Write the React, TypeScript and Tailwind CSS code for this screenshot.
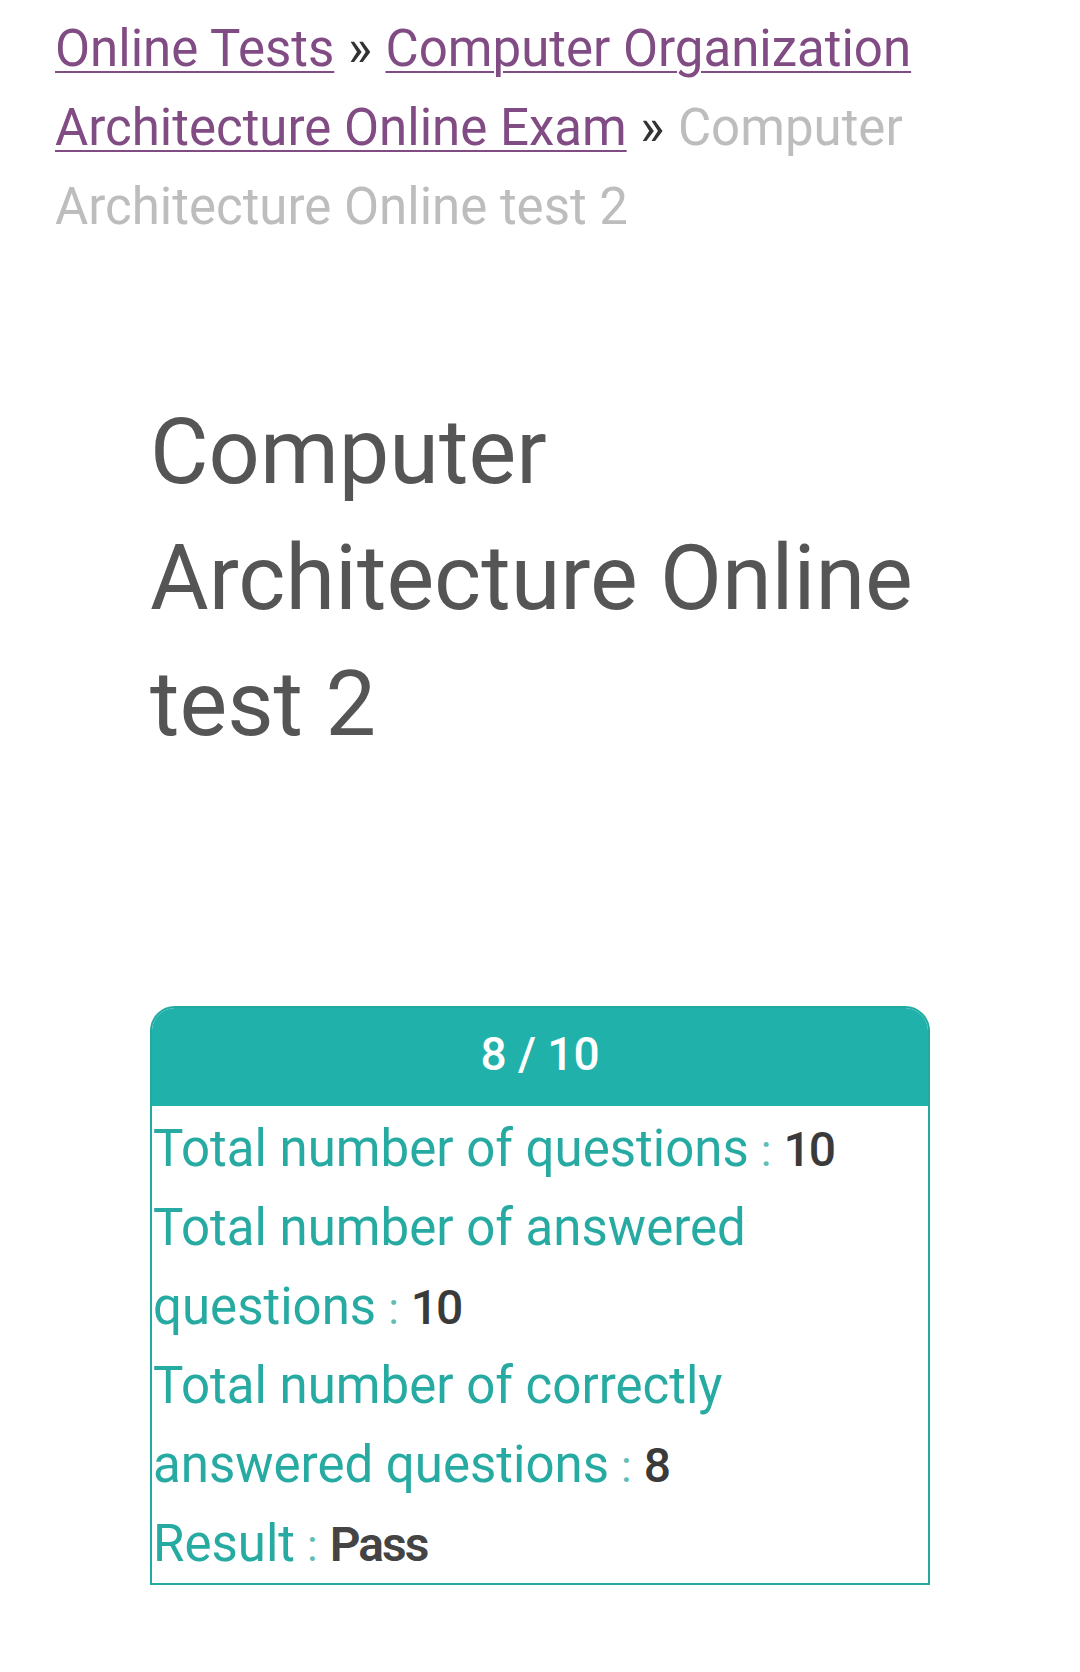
import React from 'react';

const rows: { label: string; value: string; strong?: boolean }[] = [
    { label: 'Total number of questions', value: '10' },
    { label: 'Total number of answered questions', value: '10' },
    { label: 'Total number of correctly answered questions', value: '8' },
    { label: 'Result', value: 'Pass', strong: true },
];

export default function App() {
    return (
        <div className="min-h-[1672px] bg-white font-['Roboto',sans-serif]">
            {/* breadcrumb */}
            <nav className="px-[55px] pt-[9px] text-[51px] leading-[79px] text-[#bdbdbd]">
                <a href="#" className="text-[#814b84] underline decoration-2 underline-offset-[5px]">
                    Online Tests
                </a>
                <span className="text-[#333] px-[1px]"> » </span>
                <a href="#" className="text-[#814b84] underline decoration-2 underline-offset-[5px]">
                    Computer Organization Architecture Online Exam
                </a>
                <span className="text-[#333] px-[1px]"> » </span>
                <span>Computer Architecture Online test 2</span>
            </nav>

            <main className="mx-[150px] w-[780px]">
                <h1 className="mt-[144px] text-[90px] leading-[126px] font-normal text-[#555]">
                    Computer Architecture Online test 2
                </h1>

                <div className="mt-[238px] border-2 border-[#20aaa2] rounded-t-[25px] overflow-hidden">
                    <div className="h-[98px] pb-[6px] bg-[#20b2aa] flex items-center justify-center text-white text-[46px] font-medium">
                        8 / 10
                    </div>
                    <div className="pt-[3px] text-[51px] leading-[79px] text-[#26aaa2] pl-[1px]">
                        {rows.map((r) => (
                            <div key={r.label}>
                                {r.label}
                                <span className="text-[#5fbdb6] text-[44px] leading-none px-[12px]">:</span>
                                <span
                                    className={
                                        r.strong
                                            ? 'text-[#444] text-[48px] leading-none font-semibold tracking-[-2px]'
                                            : 'text-[#3a3a3a] text-[48px] leading-none font-medium tracking-[-2px]'
                                    }
                                >
                                    {r.value}
                                </span>
                            </div>
                        ))}
                    </div>
                </div>
            </main>
        </div>
    );
}
